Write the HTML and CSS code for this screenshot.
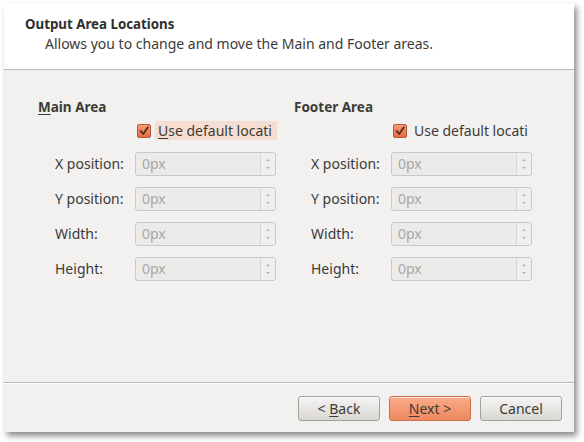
FILE: index.html
```html
<!DOCTYPE html>
<html>
<head>
<meta charset="utf-8">
<link rel="stylesheet" href="styles.css">
</head>
<body>
<div class="window">
  <div class="header">
    <div class="title">Output Area Locations</div>
    <div class="subtitle">Allows you to change and move the Main and Footer areas.</div>
  </div>
  <div class="content">
    <div class="section">
      <div class="heading"><u>M</u>ain Area</div>
      <div class="checkrow">
        <span class="check"><svg width="14" height="14" viewBox="0 0 14 14"><path d="M3 7 L6 10.5 L11.5 2.5" fill="none" stroke="#4a2a1c" stroke-width="2" stroke-linecap="round" stroke-linejoin="round"/></svg></span>
        <span class="checklabel focused"><u>U</u>se default locati</span>
      </div>
      <div class="fields">
        <div class="lbl">X position:</div><div class="spin"><span class="val">0px</span><span class="arrows"><i class="up"></i><i class="down"></i></span></div>
        <div class="lbl">Y position:</div><div class="spin"><span class="val">0px</span><span class="arrows"><i class="up"></i><i class="down"></i></span></div>
        <div class="lbl">Width:</div><div class="spin"><span class="val">0px</span><span class="arrows"><i class="up"></i><i class="down"></i></span></div>
        <div class="lbl">Height:</div><div class="spin"><span class="val">0px</span><span class="arrows"><i class="up"></i><i class="down"></i></span></div>
      </div>
    </div>
    <div class="section">
      <div class="heading">Footer Area</div>
      <div class="checkrow">
        <span class="check"><svg width="14" height="14" viewBox="0 0 14 14"><path d="M3 7 L6 10.5 L11.5 2.5" fill="none" stroke="#4a2a1c" stroke-width="2" stroke-linecap="round" stroke-linejoin="round"/></svg></span>
        <span class="checklabel">Use default locati</span>
      </div>
      <div class="fields">
        <div class="lbl">X position:</div><div class="spin"><span class="val">0px</span><span class="arrows"><i class="up"></i><i class="down"></i></span></div>
        <div class="lbl">Y position:</div><div class="spin"><span class="val">0px</span><span class="arrows"><i class="up"></i><i class="down"></i></span></div>
        <div class="lbl">Width:</div><div class="spin"><span class="val">0px</span><span class="arrows"><i class="up"></i><i class="down"></i></span></div>
        <div class="lbl">Height:</div><div class="spin"><span class="val">0px</span><span class="arrows"><i class="up"></i><i class="down"></i></span></div>
      </div>
    </div>
  </div>
  <div class="footer">
    <button class="btn">&lt; <u>B</u>ack</button>
    <button class="btn primary"><u>N</u>ext &gt;</button>
    <button class="btn">Cancel</button>
  </div>
</div>
</body>
</html>
```

FILE: styles.css
```css
html, body {
  margin: 0;
  padding: 0;
  background: #ffffff;
}
body {
  width: 584px;
  height: 442px;
  overflow: hidden;
  font-family: "Noto Sans", "DejaVu Sans", sans-serif;
  font-size: 14px;
  color: #3c3b37;
}
.window {
  margin: 3px 0 0 4px;
  width: 570px;
  height: 429px;
  background: #f2f1f0;
  box-shadow: 3px 4px 6px rgba(0,0,0,0.45);
  display: flex;
  flex-direction: column;
}
.header {
  background: #ffffff;
  height: 67px;
  box-sizing: border-box;
  padding: 12px 0 0 21px;
  border-bottom: 1px solid #b9b7b2;
}
.title {
  font-weight: bold;
  font-size: 13.3px;
  line-height: 18px;
  color: #2f2e2b;
}
.subtitle {
  padding-left: 20px;
  line-height: 20px;
  margin-top: 1px;
}
.content {
  flex: 1;
  display: flex;
  gap: 17px;
  padding: 28px 0 0 34px;
  border-bottom: 1px solid #b9b7b2;
}
.section {
  width: 239px;
}
.heading {
  font-weight: bold;
  font-size: 13.5px;
  line-height: 18px;
  color: #3c3b37;
}
.checkrow {
  display: flex;
  align-items: center;
  height: 19px;
  margin-top: 5px;
  padding-left: 99px;
}
.check {
  width: 14px;
  height: 14px;
  box-sizing: border-box;
  border: 1px solid #b2573a;
  border-radius: 2px;
  background: linear-gradient(#f49b72, #e86a3e);
  display: flex;
  align-items: center;
  justify-content: center;
}
.check svg {
  display: block;
}
.checklabel {
  margin-left: 4px;
  padding-left: 3px;
  height: 19px;
  line-height: 19px;
  flex: 1;
  white-space: nowrap;
  overflow: hidden;
}
.checklabel.focused {
  background: #f5ddd2;
}
.fields {
  display: grid;
  grid-template-columns: 97px 141px;
  grid-auto-rows: 24px;
  row-gap: 11px;
  margin-top: 12px;
}
.lbl {
  padding-left: 17px;
  line-height: 24px;
  white-space: nowrap;
}
.spin {
  box-sizing: border-box;
  border: 1px solid #cac8c4;
  border-radius: 3px;
  background: #ecebea;
  display: flex;
}
.val {
  flex: 1;
  padding-left: 6px;
  line-height: 22px;
  color: #a9a7a3;
}
.arrows {
  width: 14px;
  border-left: 1px solid #d9d8d5;
  background: #f0efee;
  border-radius: 0 2px 2px 0;
  display: flex;
  flex-direction: column;
  align-items: center;
  justify-content: center;
  gap: 6px;
}
.arrows i {
  display: block;
  width: 0;
  height: 0;
  border-left: 2px solid transparent;
  border-right: 2px solid transparent;
}
.arrows .up {
  border-bottom: 2px solid #b4b2ae;
}
.arrows .down {
  border-top: 2px solid #b4b2ae;
}
.footer {
  height: 49px;
  box-sizing: border-box;
  border-top: 1px solid #ffffff;
  display: flex;
  justify-content: flex-end;
  align-items: flex-start;
  gap: 9px;
  padding: 12px 12px 0 0;
}
.btn {
  width: 82px;
  height: 25px;
  box-sizing: border-box;
  border: 1px solid #a3a19c;
  border-radius: 3px;
  background: linear-gradient(#f6f5f4, #d9d7d3);
  font-family: inherit;
  font-size: 14px;
  color: #3c3b37;
  padding: 0;
  box-shadow: inset 0 1px 0 rgba(255,255,255,0.7);
}
.btn.primary {
  border-color: #c7714c;
  background: linear-gradient(#f9ac88, #ef8860);
}
u {
  text-decoration: underline;
  text-underline-offset: 2px;
}
```
